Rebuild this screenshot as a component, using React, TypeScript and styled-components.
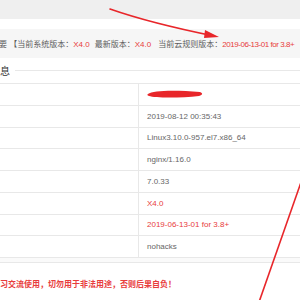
import React from 'react';
import styled, { createGlobalStyle } from 'styled-components';

const GlobalStyle = createGlobalStyle`
  body {
    margin: 0;
    background: #ffffff;
    font-family: "Liberation Sans", "Noto Sans CJK SC", sans-serif;
  }
`;

const Page = styled.div`
  position: relative;
  width: 300px;
  height: 300px;
  overflow: hidden;
  background: #ffffff;
`;

const TopBar = styled.div`
  height: 19px;
  background: #efefef;
`;

const Panel = styled.div`
  padding-top: 10px;
  background: #ffffff;
`;

const Notice = styled.div`
  height: 29px;
  display: flex;
  align-items: center;
  background: #f6f6f6;
  white-space: nowrap;
  font-size: 8px;
  color: #5c5c5c;
`;

const NoticeText = styled.div`
  margin-left: -1px;
`;

const Gap = styled.span<{ $w: number }>`
  display: inline-block;
  width: ${({ $w }) => $w}px;
`;

const Red = styled.span<{ $tight?: boolean }>`
  color: #e83c3c;
  letter-spacing: ${({ $tight }) => ($tight ? '-0.45px' : '0')};
`;

const SectionTitle = styled.div`
  height: 25px;
  display: flex;
  align-items: center;
  font-size: 10px;
  color: #333333;
`;

const TitleRule = styled.div`
  flex: 1;
  height: 1px;
  margin-left: 5px;
  background: #e8e8e8;
`;

const Table = styled.div`
  border-top: 1px solid #e8e8e8;
`;

const Row = styled.div`
  display: grid;
  grid-template-columns: 139px 1fr;
  height: 21.75px;
  box-sizing: border-box;
  border-bottom: 1px solid #e8e8e8;
`;

const LabelCell = styled.div`
  border-right: 1px solid #e8e8e8;
`;

const ValueCell = styled.div<{ $red?: boolean }>`
  display: flex;
  align-items: center;
  padding-left: 8px;
  font-size: 8px;
  white-space: nowrap;
  color: ${({ $red }) => ($red ? '#e83c3c' : '#666666')};
`;

const Spacer = styled.div`
  height: 4px;
  background: #fafafa;
`;

const Warning = styled.div`
  border-top: 1px solid #e8e8e8;
  padding-top: 17px;
  height: 35px;
  box-sizing: border-box;
  font-size: 8px;
  line-height: 10px;
  font-weight: bold;
  color: #e83c3c;
  white-space: nowrap;
`;

const WarningText = styled.div`
  margin-left: 0;
`;

const Overlay = styled.svg`
  position: absolute;
  left: 0;
  top: 0;
  pointer-events: none;
`;

const Scribble = () => (
  <svg width="56" height="10" viewBox="0 0 56 10">
    <path d="M1 5 C6 1, 30 1, 53 3 C56 4, 56 6, 52 7 C34 9, 8 9, 2 7 C0 6.5, 0 5.5, 1 5 Z" fill="#e8262a" />
  </svg>
);

const rows: { value: React.ReactNode; red?: boolean }[] = [
  { value: <Scribble /> },
  { value: '2019-08-12 00:35:43' },
  { value: 'Linux3.10.0-957.el7.x86_64' },
  { value: 'nginx/1.16.0' },
  { value: '7.0.33' },
  { value: 'X4.0', red: true },
  { value: '2019-06-13-01 for 3.8+', red: true },
  { value: 'nohacks' },
];

const App: React.FC = () => (
  <Page>
    <GlobalStyle />
    <TopBar />
    <Panel>
      <Notice>
        <NoticeText>
          要 【当前系统版本：<Red>X4.0</Red>
          <Gap $w={5} />
          最新版本：<Red>X4.0</Red>
          <Gap $w={7} />
          当前云规则版本：<Red $tight>2019-06-13-01 for 3.8+</Red>
        </NoticeText>
      </Notice>
      <SectionTitle>
        息
        <TitleRule />
      </SectionTitle>
      <Table>
        {rows.map((row, i) => (
          <Row key={i}>
            <LabelCell />
            <ValueCell $red={row.red}>{row.value}</ValueCell>
          </Row>
        ))}
      </Table>
      <Spacer />
      <Warning>
        <WarningText>习交流使用，切勿用于非法用途，否则后果自负！</WarningText>
      </Warning>
    </Panel>
    <Overlay width="300" height="300" viewBox="0 0 300 300">
      <path d="M110 9 Q150 23 214 36" stroke="#e8262a" strokeWidth="1.6" fill="none" strokeLinecap="round" />
      <path d="M205 30 L219 37 L204 38 Z" fill="#e8262a" />
      <path d="M306 168 L258 305" stroke="#e8262a" strokeWidth="1.6" fill="none" />
    </Overlay>
  </Page>
);

export default App;
